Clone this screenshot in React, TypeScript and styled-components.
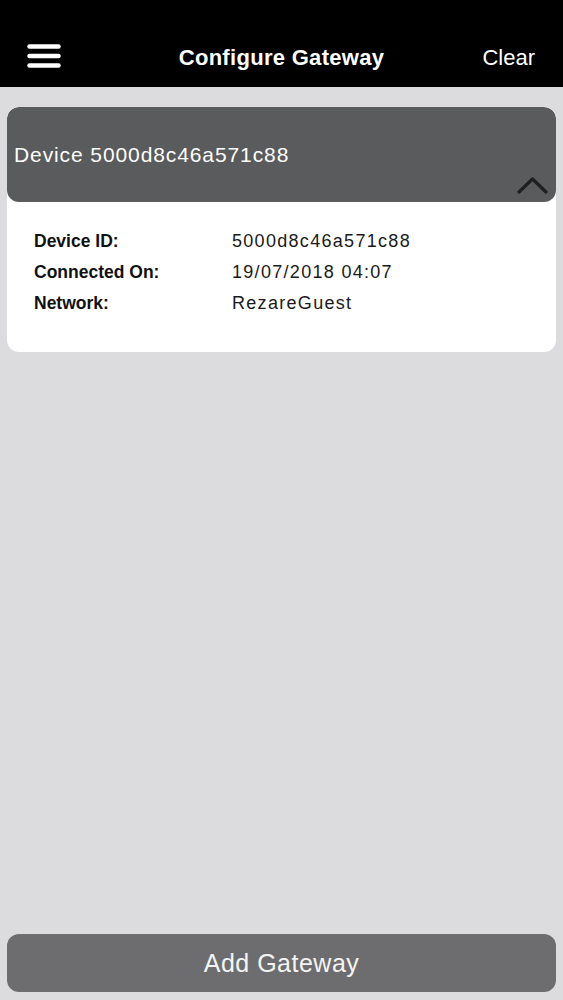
import React from 'react';
import styled, { createGlobalStyle } from 'styled-components';

const GlobalStyle = createGlobalStyle`
    html, body {
        margin: 0;
        padding: 0;
        background: #dcdcde;
        font-family: 'Liberation Sans', Arial, sans-serif;
    }
`;

const Screen = styled.div`
    width: 563px;
    height: 1000px;
    display: flex;
    flex-direction: column;
    background: #dcdcde;
`;

const TopBar = styled.header`
    height: 87px;
    background: #000;
    display: grid;
    grid-template-columns: 120px 1fr 120px;
    align-items: end;
    padding-bottom: 14px;
    box-sizing: border-box;
    color: #fff;
`;

const MenuButton = styled.div`
    padding-left: 27px;
    display: flex;
    align-items: center;
    height: 30px;
    margin-bottom: 2px;
`;

const Title = styled.h1`
    margin: 0;
    text-align: center;
    font-size: 22px;
    font-weight: bold;
    letter-spacing: 0.3px;
    line-height: 30px;
`;

const ClearLink = styled.span`
    text-align: right;
    padding-right: 28px;
    font-size: 22px;
    line-height: 30px;
`;

const Content = styled.main`
    flex: 1;
    display: flex;
    flex-direction: column;
    padding: 20px 7px 8px;
`;

const DeviceCard = styled.section`
    background: #fff;
    border-radius: 12px;
    overflow: hidden;
`;

const CardHeader = styled.div`
    height: 95px;
    background: #595b5c;
    border-radius: 12px;
    position: relative;
    display: flex;
    align-items: center;
    padding: 0 7px;
    color: #fff;
    font-size: 21px;
    letter-spacing: 0.9px;
`;

const Chevron = styled.svg`
    position: absolute;
    right: 8px;
    bottom: 8px;
`;

const Details = styled.dl`
    margin: 0;
    padding: 28px 27px 38px;
    display: grid;
    grid-template-columns: 198px 1fr;
    row-gap: 9px;
    font-size: 17.5px;
    line-height: 22px;
    color: #111;
`;

const Label = styled.dt`
    font-weight: bold;
`;

const Value = styled.dd`
    margin: 0;
    font-size: 18px;
    letter-spacing: 1.3px;
    color: #1a1a1a;
`;

const Spacer = styled.div`
    flex: 1;
`;

const AddButton = styled.button`
    height: 58px;
    border: none;
    border-radius: 12px;
    background: #6d6d6f;
    color: #f4f4f4;
    font-family: 'Liberation Sans', Arial, sans-serif;
    font-size: 25px;
    letter-spacing: 0.5px;
`;

const rows = [
    { label: 'Device ID:', value: '5000d8c46a571c88' },
    { label: 'Connected On:', value: '19/07/2018 04:07' },
    { label: 'Network:', value: 'RezareGuest' },
];

export default function App() {
    return (
        <Screen>
            <GlobalStyle />
            <TopBar>
                <MenuButton>
                    <svg width="34" height="24" viewBox="0 0 34 24">
                        <g stroke="#fff" strokeWidth="4.5" strokeLinecap="round">
                            <line x1="2.5" y1="2.5" x2="31.5" y2="2.5" />
                            <line x1="2.5" y1="12" x2="31.5" y2="12" />
                            <line x1="2.5" y1="21.5" x2="31.5" y2="21.5" />
                        </g>
                    </svg>
                </MenuButton>
                <Title>Configure Gateway</Title>
                <ClearLink>Clear</ClearLink>
            </TopBar>
            <Content>
                <DeviceCard>
                    <CardHeader>
                        Device 5000d8c46a571c88
                        <Chevron width="31" height="18" viewBox="0 0 31 18">
                            <polyline
                                points="2,16 15.5,3 29,16"
                                fill="none"
                                stroke="#1e1f20"
                                strokeWidth="3.2"
                                strokeLinecap="round"
                                strokeLinejoin="round"
                            />
                        </Chevron>
                    </CardHeader>
                    <Details>
                        {rows.map((row) => (
                            <React.Fragment key={row.label}>
                                <Label>{row.label}</Label>
                                <Value>{row.value}</Value>
                            </React.Fragment>
                        ))}
                    </Details>
                </DeviceCard>
                <Spacer />
                <AddButton>Add Gateway</AddButton>
            </Content>
        </Screen>
    );
}
